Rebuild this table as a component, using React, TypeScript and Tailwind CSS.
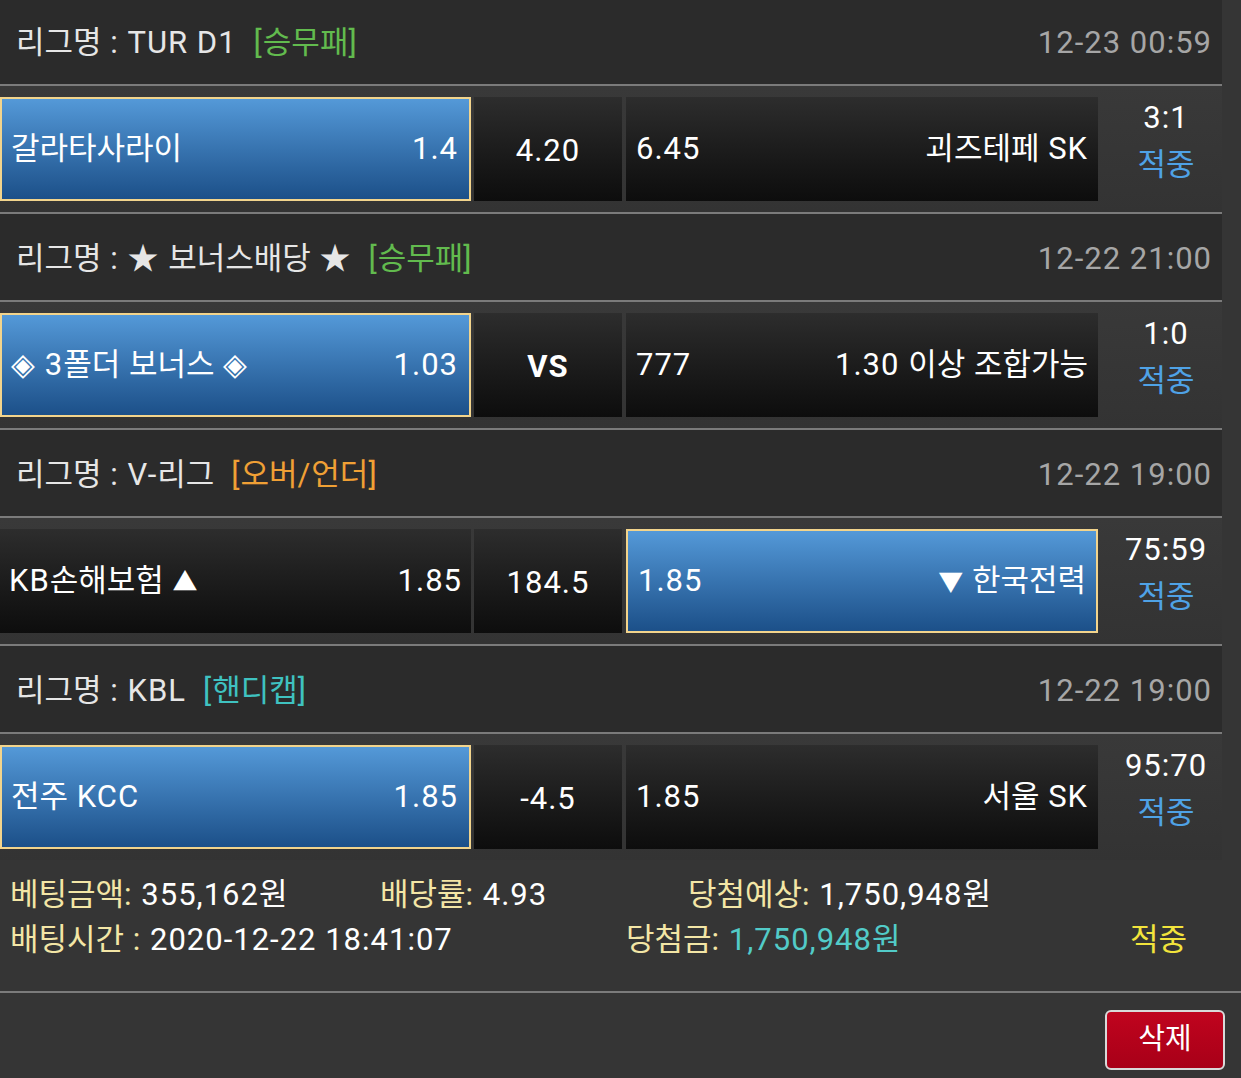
import React from "react";

interface IMatch {
    league: string;
    tag: string;
    tagColor: string;
    date: string;
    home: string;
    homeOdds: string;
    draw: string;
    drawBold?: boolean;
    away: string;
    awayOdds: string;
    pick: "home" | "away";
    score: string;
}

const matches: IMatch[] = [
    {
        league: "리그명 : TUR D1",
        tag: "[승무패]",
        tagColor: "text-[#62bb4e]",
        date: "12-23 00:59",
        home: "갈라타사라이",
        homeOdds: "1.4",
        draw: "4.20",
        away: "괴즈테페 SK",
        awayOdds: "6.45",
        pick: "home",
        score: "3:1",
    },
    {
        league: "리그명 : ★ 보너스배당 ★",
        tag: "[승무패]",
        tagColor: "text-[#62bb4e]",
        date: "12-22 21:00",
        home: "◈ 3폴더 보너스 ◈",
        homeOdds: "1.03",
        draw: "VS",
        drawBold: true,
        away: "1.30 이상 조합가능",
        awayOdds: "777",
        pick: "home",
        score: "1:0",
    },
    {
        league: "리그명 : V-리그",
        tag: "[오버/언더]",
        tagColor: "text-[#f0a035]",
        date: "12-22 19:00",
        home: "KB손해보험 ▲",
        homeOdds: "1.85",
        draw: "184.5",
        away: "▼ 한국전력",
        awayOdds: "1.85",
        pick: "away",
        score: "75:59",
    },
    {
        league: "리그명 : KBL",
        tag: "[핸디캡]",
        tagColor: "text-[#3fc2c0]",
        date: "12-22 19:00",
        home: "전주 KCC",
        homeOdds: "1.85",
        draw: "-4.5",
        away: "서울 SK",
        awayOdds: "1.85",
        pick: "home",
        score: "95:70",
    },
];

// latin gets extra tracking, hangul stays normal, arrows a bit smaller
function T({ s }: { s: string }) {
    const parts = s.split(/([\uAC00-\uD7A3]+|[▲▼])/);
    return (
        <>
            {parts.map((p, i) => {
                if (!p) return null;
                if (p === "▲" || p === "▼")
                    return (
                        <span key={i} className="text-[25px] tracking-normal">
                            {p}
                        </span>
                    );
                if (/[\uAC00-\uD7A3]/.test(p))
                    return (
                        <span key={i} className="tracking-normal">
                            {p}
                        </span>
                    );
                return <React.Fragment key={i}>{p}</React.Fragment>;
            })}
        </>
    );
}

function cellClass(selected: boolean) {
    return selected
        ? "border-2 border-[#f2d48c] bg-linear-to-b from-[#5499d8] to-[#1c5089]"
        : "bg-linear-to-b from-[#2d2d2d] to-[#0d0d0d]";
}

function MatchBlock({ m, last }: { m: IMatch; last?: boolean }) {
    return (
        <div>
            <div className="h-[86px] bg-[#2b2b2b] flex items-center justify-between pl-4 pr-[10px] pt-1">
                <div className="flex items-center text-[#e6e6e6]">
                    <span>
                        <T s={m.league} />
                    </span>
                    <span className={`ml-[17px] ${m.tagColor}`}>
                        <T s={m.tag} />
                    </span>
                </div>
                <span className="text-[#a6a6a6]">{m.date}</span>
            </div>
            <div className="h-[2px] bg-[#7b7b7b]" />
            <div className="h-[126px] py-[11px] flex bg-linear-to-b from-[#393939] to-[#333333]">
                <div
                    className={`w-[471px] shrink-0 h-full flex items-center justify-between text-white pl-[9px] ${
                        m.pick === "home" ? "pr-[11px]" : "pr-[9px]"
                    } ${cellClass(m.pick === "home")}`}
                >
                    <span>
                        <T s={m.home} />
                    </span>
                    <span>{m.homeOdds}</span>
                </div>
                <div
                    className={`w-[148px] shrink-0 ml-[3px] h-full flex items-center justify-center pt-1 text-white ${
                        m.drawBold ? "font-bold" : ""
                    } ${cellClass(false)}`}
                >
                    {m.draw}
                </div>
                <div
                    className={`w-[472px] shrink-0 ml-[4px] h-full flex items-center justify-between text-white pl-[10px] pr-[10px] ${cellClass(
                        m.pick === "away"
                    )}`}
                >
                    <span>{m.awayOdds}</span>
                    <span>
                        <T s={m.away} />
                    </span>
                </div>
                <div className="w-[124px] shrink-0 -mt-[3px] pl-3 flex flex-col items-center leading-[47px]">
                    <span className="text-white">{m.score}</span>
                    <span className="text-[#4fa2e6] tracking-normal">적중</span>
                </div>
            </div>
            {!last && <div className="h-[2px] bg-[#7b7b7b]" />}
        </div>
    );
}

export default function App() {
    return (
        <div className="w-[1241px] h-[1078px] overflow-hidden bg-[#353535] text-[31px] tracking-[1px] font-['Roboto','Noto_Sans_CJK_KR',sans-serif]">
            <div className="w-[1222px] -mt-[2px]">
                {matches.map((m, i) => (
                    <MatchBlock key={i} m={m} last={i === matches.length - 1} />
                ))}
            </div>
            <div className="h-[131px] pt-3 pl-[10px] leading-[45px]">
                <div className="flex">
                    <div className="w-[370px]">
                        <span className="text-[#f3e6a6]">
                            <T s="베팅금액: " />
                        </span>
                        <span className="text-white">
                            <T s="355,162원" />
                        </span>
                    </div>
                    <div className="w-[308px]">
                        <span className="text-[#f3e6a6]">
                            <T s="배당률: " />
                        </span>
                        <span className="text-white">4.93</span>
                    </div>
                    <div>
                        <span className="text-[#f3e6a6]">
                            <T s="당첨예상: " />
                        </span>
                        <span className="text-white">
                            <T s="1,750,948원" />
                        </span>
                    </div>
                </div>
                <div className="flex">
                    <div className="w-[616px]">
                        <span className="text-[#f3e6a6]">
                            <T s="배팅시간 : " />
                        </span>
                        <span className="text-white">2020-12-22 18:41:07</span>
                    </div>
                    <div className="w-[504px]">
                        <span className="text-[#f3e6a6]">
                            <T s="당첨금: " />
                        </span>
                        <span className="text-[#52cbc8]">
                            <T s="1,750,948원" />
                        </span>
                    </div>
                    <div className="text-[#f2e43c] tracking-normal">적중</div>
                </div>
            </div>
            <div className="h-[2px] bg-[#7b7b7b]" />
            <div className="flex justify-end pt-[17px] pr-4">
                <button className="w-[120px] h-[60px] rounded-[6px] border-2 border-[#d9d9d9] bg-linear-to-b from-[#c0041e] to-[#a80018] text-white text-[29px] tracking-normal flex items-center justify-center">
                    삭제
                </button>
            </div>
        </div>
    );
}
